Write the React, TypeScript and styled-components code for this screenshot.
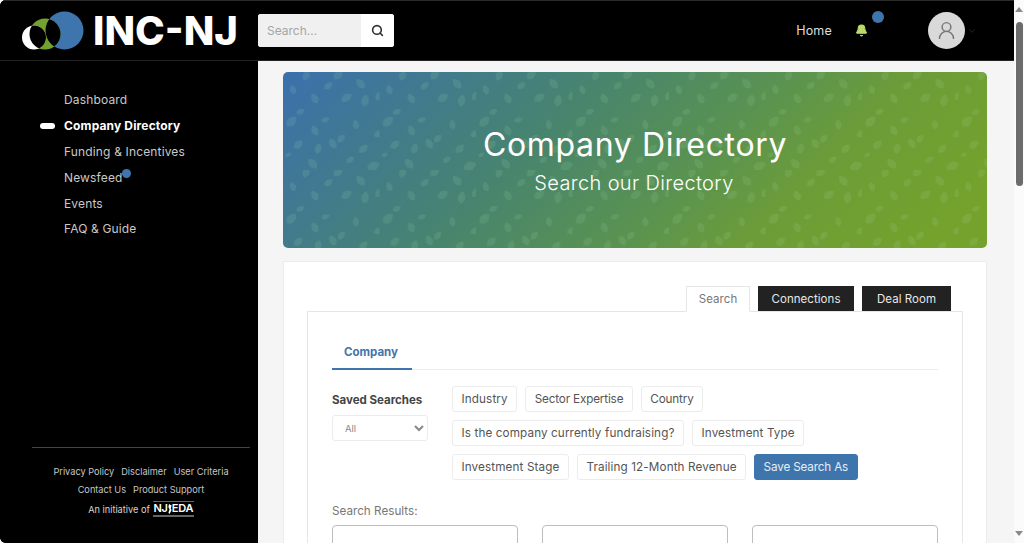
import React from 'react'
import styled, { createGlobalStyle } from 'styled-components'
import { Search, UserRound, ChevronDown, Bell } from 'lucide-react'

const colors = {
  blue: '#3f75ad',
  green: '#73a22e',
  lime: '#bcd96c',
  ink: '#444444',
  line: '#e6e6e6',
}

const GlobalStyle = createGlobalStyle`
  html, body {
    margin: 0;
    height: 100%;
    overflow: hidden;
    background: #ffffff;
  }
  * {
    box-sizing: border-box;
  }
  body {
    font-family: Inter, "Open Sans", "Liberation Sans", sans-serif;
  }
`

const Page = styled.div`
  display: flex;
  width: 1024px;
  height: 543px;
  overflow: hidden;
`

const Shell = styled.div`
  flex: 1;
  min-width: 0;
  display: flex;
  flex-direction: column;
  border-radius: 6px 0 0 6px;
  overflow: hidden;
  background: #000;
`

const Header = styled.header`
  flex: none;
  height: 61px;
  display: flex;
  align-items: center;
  padding: 0 0 0 21px;
  background: #000;
  border-top: 1px solid #2a2a2a;
  border-bottom: 1px solid #222;
`

const Brand = styled.div`
  width: 237px;
  display: flex;
  align-items: center;
  gap: 9px;
`

const BrandName = styled.span`
  color: #fff;
  font-size: 40px;
  font-weight: 800;
  line-height: 1;
`

const SearchBox = styled.form`
  width: 136px;
  height: 33px;
  display: flex;
  border-radius: 3px;
  overflow: hidden;
  background: #fff;
`

const SearchInput = styled.input`
  width: 103px;
  border: 0;
  padding: 0 9px;
  background: #f0f0f0;
  font: 400 12px Inter, sans-serif;
  &::placeholder {
    color: #a5a5a5;
    opacity: 1;
  }
`

const SearchButton = styled.button`
  flex: 1;
  border: 0;
  padding: 0;
  background: #fff;
  color: #333;
  display: flex;
  align-items: center;
  justify-content: center;
`

const HeaderRight = styled.nav`
  margin-left: auto;
  display: flex;
  align-items: center;
  height: 100%;
`

const HomeLink = styled.a`
  color: #dedede;
  font-size: 12.5px;
  font-weight: 400;
  letter-spacing: 0.2px;
`

const BellWrap = styled.span`
  position: relative;
  display: flex;
  margin-left: 23px;
  margin-right: 60px;
  color: ${colors.lime};
`

const BellDot = styled.span`
  position: absolute;
  left: 17px;
  top: -13px;
  width: 12px;
  height: 12px;
  border-radius: 50%;
  background: ${colors.blue};
`

const Avatar = styled.span`
  width: 37px;
  height: 37px;
  border-radius: 50%;
  background: #d9d9d9;
  color: #777;
  display: flex;
  align-items: center;
  justify-content: center;
`

const AvatarCaret = styled.span`
  display: flex;
  width: 49px;
  padding-left: 2px;
  color: #2c2c2c;
`

const Body = styled.div`
  flex: 1;
  min-height: 0;
  display: flex;
`

const Sidebar = styled.aside`
  flex: none;
  width: 258px;
  display: flex;
  flex-direction: column;
  padding: 26px 8px 0 32px;
  background: #000;
`

const NavList = styled.ul`
  margin: 0;
  padding: 0;
  list-style: none;
`

const NavItem = styled.li<{ $active?: boolean }>`
  position: relative;
  height: 25.8px;
  display: flex;
  align-items: center;
  padding-left: 32px;
  font-size: 12px;
  letter-spacing: 0.15px;
  color: ${p => (p.$active ? '#fff' : '#c9c9c9')};
  font-weight: ${p => (p.$active ? 700 : 400)};
`

const ActivePill = styled.span`
  position: absolute;
  left: 8px;
  top: 10px;
  width: 15px;
  height: 6px;
  border-radius: 3px;
  background: #fff;
`

const NavDot = styled.span`
  width: 9px;
  height: 9px;
  margin: -7px 0 0 -1px;
  border-radius: 50%;
  background: ${colors.blue};
`

const SideFooter = styled.footer`
  margin-top: auto;
  height: 96px;
  padding-top: 14px;
  border-top: 1px solid #444;
  color: #c6c6c6;
  font-size: 9.2px;
  text-align: center;
`

const FooterLine = styled.div`
  display: flex;
  justify-content: center;
  align-items: center;
  gap: 7px;
  height: 18.5px;
`

const Initiative = styled(FooterLine)`
  gap: 3px;
  height: 20px;
  color: #d6d6d6;
`

const EdaMark = styled.span`
  display: inline-flex;
  flex-direction: column;
  width: 41px;
  padding-top: 1px;
  color: #fff;
  border-top: 1px solid #666;
`

const EdaLetters = styled.span`
  display: flex;
  align-items: center;
  justify-content: center;
  font-size: 11px;
  font-weight: 600;
  line-height: 11px;
  letter-spacing: -0.2px;
`

const EdaRule = styled.span`
  height: 2px;
  margin-top: 1px;
  background: #666;
`

const Main = styled.main`
  flex: 1;
  min-width: 0;
  padding: 11px 27px 0 25px;
  background: #f5f5f5;
  overflow: hidden;
`

const Hero = styled.section`
  position: relative;
  height: 176px;
  border-radius: 5px;
  overflow: hidden;
  display: flex;
  flex-direction: column;
  align-items: center;
  color: #fff;
  background: linear-gradient(135deg, #3b70ad 0%, #47846f 36%, #5a9350 58%, #6c9c38 72%, #74a22d 92%);
`

const HeroPattern = styled.svg`
  position: absolute;
  inset: 0;
  width: 100%;
  height: 100%;
`

const HeroTitle = styled.h1`
  position: relative;
  margin: 54px 0 0;
  font-size: 32px;
  font-weight: 400;
  line-height: 38px;
  letter-spacing: 0.65px;
`

const HeroSubtitle = styled.p`
  position: relative;
  margin: 6px 0 0 -2px;
  font-size: 20px;
  font-weight: 300;
  line-height: 26px;
  letter-spacing: 0.35px;
`

const Card = styled.section`
  margin-top: 13px;
  height: 400px;
  padding: 23px 23px 0 23px;
  background: #fff;
  border: 1px solid #ececec;
`

const TabBar = styled.div`
  display: flex;
  justify-content: flex-end;
  align-items: flex-end;
  gap: 8px;
  height: 26px;
  padding-right: 12px;
`

const Tab = styled.button<{ $active?: boolean; $width: number }>`
  width: ${p => p.$width}px;
  height: ${p => (p.$active ? 26 : 25)}px;
  padding: 0;
  margin-bottom: ${p => (p.$active ? -1 : 0)}px;
  position: relative;
  font: 400 11.5px Inter, sans-serif;
  letter-spacing: 0.05px;
  color: ${p => (p.$active ? '#777' : '#e8e8e8')};
  background: ${p => (p.$active ? '#fff' : '#222')};
  border: 1px solid ${p => (p.$active ? colors.line : '#222')};
  border-bottom-color: ${p => (p.$active ? '#fff' : '#222')};
`

const Panel = styled.div`
  height: 300px;
  padding: 24px 24px 0;
  border: 1px solid ${colors.line};
`

const SubTabs = styled.div`
  display: flex;
  height: 34px;
  border-bottom: 1px solid #ececec;
`

const SubTab = styled.span`
  width: 80px;
  height: 34px;
  padding: 9px 0 0 12px;
  font-size: 11.5px;
  font-weight: 700;
  color: ${colors.blue};
  border-bottom: 2px solid ${colors.blue};
`

const Filters = styled.div`
  display: flex;
  margin-top: 16px;
`

const SavedColumn = styled.div`
  flex: none;
  width: 120px;
  padding-top: 7px;
`

const SavedLabel = styled.label`
  display: block;
  height: 22px;
  font-size: 11.5px;
  font-weight: 700;
  line-height: 15px;
  color: ${colors.ink};
`

const SavedSelect = styled.select`
  display: block;
  width: 96px;
  height: 26px;
  padding: 0 6px 0 8px;
  font: 400 9.5px Inter, sans-serif;
  color: #888;
  background: #fff;
  border: 1px solid #ececec;
  border-radius: 3px;
`

const ChipArea = styled.div`
  flex: 1;
  display: flex;
  flex-direction: column;
  gap: 8px;
`

const ChipRow = styled.div`
  display: flex;
  gap: 8px;
`

const Chip = styled.button<{ $primary?: boolean; $tight?: boolean }>`
  height: 26px;
  padding: 0 8.5px;
  font: 400 11.7px Inter, sans-serif;
  letter-spacing: ${p => (p.$tight ? -0.15 : 0.12)}px;
  white-space: nowrap;
  border-radius: 3px;
  color: ${p => (p.$primary ? '#e4edf6' : '#555')};
  background: ${p => (p.$primary ? colors.blue : '#fff')};
  border: 1px solid ${p => (p.$primary ? colors.blue : '#ececec')};
`

const ResultsLabel = styled.div`
  margin-top: 24px;
  font-size: 11.7px;
  line-height: 15px;
  color: #777;
`

const ResultFields = styled.div`
  display: grid;
  grid-template-columns: repeat(3, 186px);
  justify-content: space-between;
  margin-top: 6px;
`

const ResultField = styled.input`
  height: 34px;
  background: #fff;
  border: 1px solid #bdbdbd;
  border-radius: 4px;
`

const ScrollTrack = styled.div`
  flex: none;
  width: 10px;
  display: flex;
  flex-direction: column;
  align-items: center;
  background: #fbfbfb;
`

const ScrollArrow = styled.span<{ $down?: boolean }>`
  flex: none;
  margin: ${p => (p.$down ? 'auto 0 7px' : '7px 0 0')};
  width: 0;
  height: 0;
  border-left: 4px solid transparent;
  border-right: 4px solid transparent;
  border-bottom: ${p => (p.$down ? '0' : '5px solid #8a8a8a')};
  border-top: ${p => (p.$down ? '5px solid #8a8a8a' : '0')};
`

const ScrollThumb = styled.span`
  flex: none;
  width: 7px;
  height: 164px;
  margin-top: 10px;
  border-radius: 4px;
  background: #6c6c6c;
`

// one tile of the leaf texture: x, y, rotation, scale
const leaves = [
  [23, 4, 20, 1], [55, 3, 40, 1.1], [78, 12, -40, 1.1], [45, 14, 50, 0.9], [10, 18, -20, 0.9],
  [32, 27, -30, 1], [63, 26, 55, 1.1], [82, 29, 10, 1.1], [96, 24, 35, 1], [17, 40, 65, 0.8],
  [8, 50, 45, 1.2], [42, 48, 70, 0.8], [73, 53, -10, 0.9], [95, 62, 60, 0.9], [32, 59, -25, 1],
  [58, 67, 40, 0.9], [50, 72, -30, 1], [15, 73, 50, 1], [35, 77, 15, 1], [80, 77, 45, 1],
  [67, 88, 55, 0.8], [30, 92, -40, 1.1], [5, 83, 60, 0.6], [90, 94, 70, 1.2],
]

const HeroTexture = () => (
  <HeroPattern aria-hidden="true">
    <defs>
      <pattern id="leaf-tile" width="96.5" height="97" patternUnits="userSpaceOnUse">
        {leaves.map(([x, y, r, s], i) => (
          <path
            key={i}
            d="M0 -6 C4 -3 5 2 0 5 C-5 2 -4 -3 0 -6Z"
            fill="#a8e0b0"
            fillOpacity="0.13"
            transform={`translate(${x} ${y}) rotate(${r}) scale(${s})`}
          />
        ))}
      </pattern>
    </defs>
    <rect width="100%" height="100%" fill="url(#leaf-tile)" />
  </HeroPattern>
)

const Logo = () => (
  <svg width="63" height="40" viewBox="0 0 63 40" aria-hidden="true">
    <defs>
      <clipPath id="logo-green">
        <circle cx="24" cy="23" r="15.5" />
      </clipPath>
    </defs>
    <circle cx="43.5" cy="19.5" r="19" fill={colors.blue} />
    <circle cx="24" cy="23" r="15.5" fill={colors.green} />
    <circle cx="13" cy="26.5" r="12" fill="#fff" />
    <g clipPath="url(#logo-green)">
      <circle cx="43.5" cy="19.5" r="19" fill="#000" />
      <circle cx="13" cy="26.5" r="12" fill="#000" />
    </g>
  </svg>
)

const navItems = ['Dashboard', 'Company Directory', 'Funding & Incentives', 'Newsfeed', 'Events', 'FAQ & Guide']

const App = () => (
  <Page>
    <GlobalStyle />
    <Shell>
      <Header>
        <Brand>
          <Logo />
          <BrandName>INC-NJ</BrandName>
        </Brand>
        <SearchBox>
          <SearchInput placeholder="Search..." />
          <SearchButton type="button" aria-label="Search">
            <Search size={13} strokeWidth={3} />
          </SearchButton>
        </SearchBox>
        <HeaderRight>
          <HomeLink>Home</HomeLink>
          <BellWrap>
            <Bell size={13} fill="currentColor" strokeWidth={2} />
            <BellDot />
          </BellWrap>
          <Avatar>
            <UserRound size={21} strokeWidth={1.7} />
          </Avatar>
          <AvatarCaret>
            <ChevronDown size={10} />
          </AvatarCaret>
        </HeaderRight>
      </Header>
      <Body>
        <Sidebar>
          <NavList>
            {navItems.map(item => (
              <NavItem key={item} $active={item === 'Company Directory'}>
                {item === 'Company Directory' && <ActivePill />}
                {item}
                {item === 'Newsfeed' && <NavDot />}
              </NavItem>
            ))}
          </NavList>
          <SideFooter>
            <FooterLine>
              <span>Privacy Policy</span>
              <span>Disclaimer</span>
              <span>User Criteria</span>
            </FooterLine>
            <FooterLine>
              <span>Contact Us</span>
              <span>Product Support</span>
            </FooterLine>
            <Initiative>
              <span>An initiative of</span>
              <EdaMark>
                <EdaLetters>
                  NJ
                  <svg width="4" height="10" viewBox="0 0 4 10" aria-hidden="true">
                    <path d="M1 0 L3.6 1.5 L2.8 4.5 L3.6 6 L1.6 10 L0.4 8.5 L1.6 5.5 L0.4 3Z" fill="#fff" />
                  </svg>
                  EDA
                </EdaLetters>
                <EdaRule />
              </EdaMark>
            </Initiative>
          </SideFooter>
        </Sidebar>
        <Main>
          <Hero>
            <HeroTexture />
            <HeroTitle>Company Directory</HeroTitle>
            <HeroSubtitle>Search our Directory</HeroSubtitle>
          </Hero>
          <Card>
            <TabBar>
              <Tab $active $width={64}>
                Search
              </Tab>
              <Tab $width={96}>Connections</Tab>
              <Tab $width={89}>Deal Room</Tab>
            </TabBar>
            <Panel>
              <SubTabs>
                <SubTab>Company</SubTab>
              </SubTabs>
              <Filters>
                <SavedColumn>
                  <SavedLabel>Saved Searches</SavedLabel>
                  <SavedSelect defaultValue="All">
                    <option>All</option>
                  </SavedSelect>
                </SavedColumn>
                <ChipArea>
                  <ChipRow>
                    <Chip>Industry</Chip>
                    <Chip $tight>Sector Expertise</Chip>
                    <Chip $tight>Country</Chip>
                  </ChipRow>
                  <ChipRow>
                    <Chip>Is the company currently fundraising?</Chip>
                    <Chip>Investment Type</Chip>
                  </ChipRow>
                  <ChipRow>
                    <Chip>Investment Stage</Chip>
                    <Chip>Trailing 12-Month Revenue</Chip>
                    <Chip $primary $tight>
                      Save Search As
                    </Chip>
                  </ChipRow>
                </ChipArea>
              </Filters>
              <ResultsLabel>Search Results:</ResultsLabel>
              <ResultFields>
                <ResultField />
                <ResultField />
                <ResultField />
              </ResultFields>
            </Panel>
          </Card>
        </Main>
      </Body>
    </Shell>
    <ScrollTrack>
      <ScrollArrow />
      <ScrollThumb />
      <ScrollArrow $down />
    </ScrollTrack>
  </Page>
)

export default App
